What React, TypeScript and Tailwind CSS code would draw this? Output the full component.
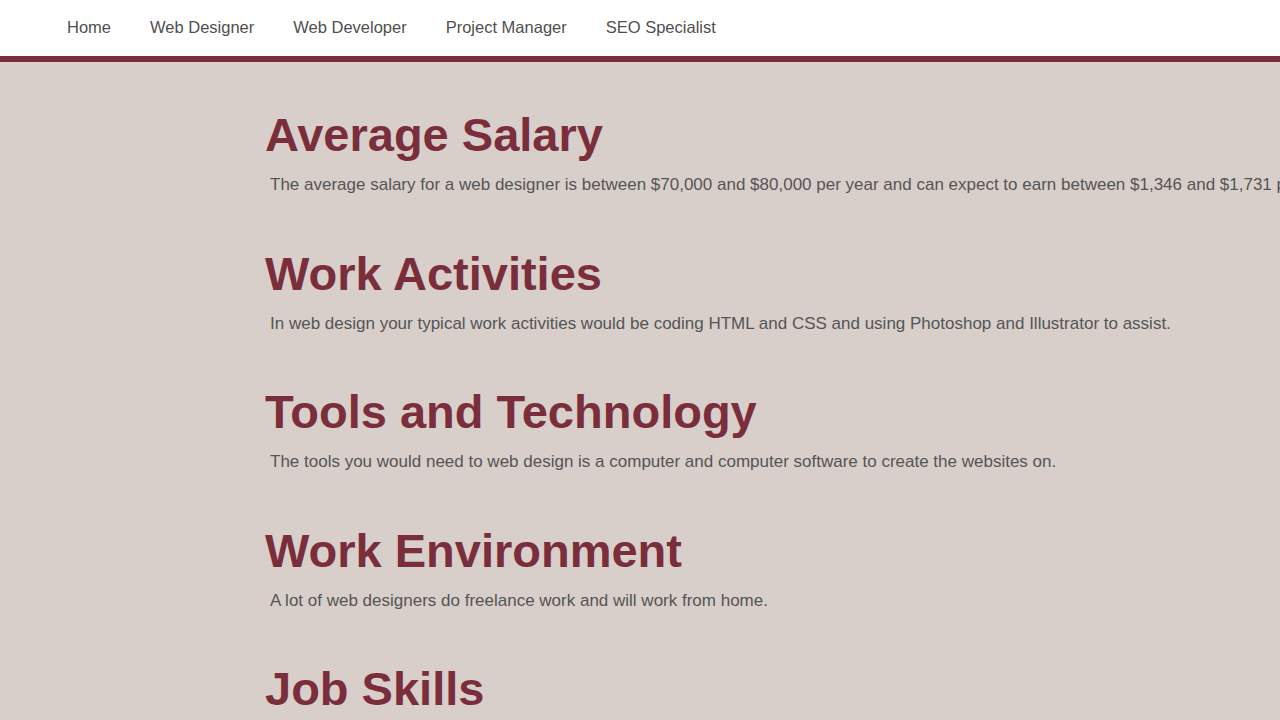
import React from 'react'

const navItems = ['Home', 'Web Designer', 'Web Developer', 'Project Manager', 'SEO Specialist']

const sections = [
  {
    title: 'Average Salary',
    text: 'The average salary for a web designer is between $70,000 and $80,000 per year and can expect to earn between $1,346 and $1,731 per week.',
  },
  {
    title: 'Work Activities',
    text: 'In web design your typical work activities would be coding HTML and CSS and using Photoshop and Illustrator to assist.',
  },
  {
    title: 'Tools and Technology',
    text: 'The tools you would need to web design is a computer and computer software to create the websites on.',
  },
  {
    title: 'Work Environment',
    text: 'A lot of web designers do freelance work and will work from home.',
  },
  {
    title: 'Job Skills',
    text: 'Web designers need to be creative and have a good eye for layout, colour and typography.',
  },
]

export default function App() {
  return (
    <div className="h-[720px] w-[1280px] overflow-hidden bg-[#d8cfca] font-['Liberation_Sans',Arial,sans-serif]">
      {/* Top navigation */}
      <nav className="flex h-[56px] items-center gap-[39px] bg-white pb-[2px] pl-[67px] text-[16.5px] text-[#4f4f4f]">
        {navItems.map((item) => (
          <a key={item} href="#" className="leading-none">
            {item}
          </a>
        ))}
      </nav>
      <div className="h-[6px] bg-[#7a2e3c]"></div>

      {/* Content */}
      <main className="flex flex-col gap-[56.5px] pl-[265px] pt-[49px]">
        {sections.map((s) => (
          <section key={s.title} className="flex flex-col gap-[18px]">
            <h2 className="text-[47px] font-bold leading-none text-[#7a2e3c]">{s.title}</h2>
            <p className="whitespace-nowrap pl-[5px] text-[17px] leading-none text-[#555555]">{s.text}</p>
          </section>
        ))}
      </main>
    </div>
  )
}
